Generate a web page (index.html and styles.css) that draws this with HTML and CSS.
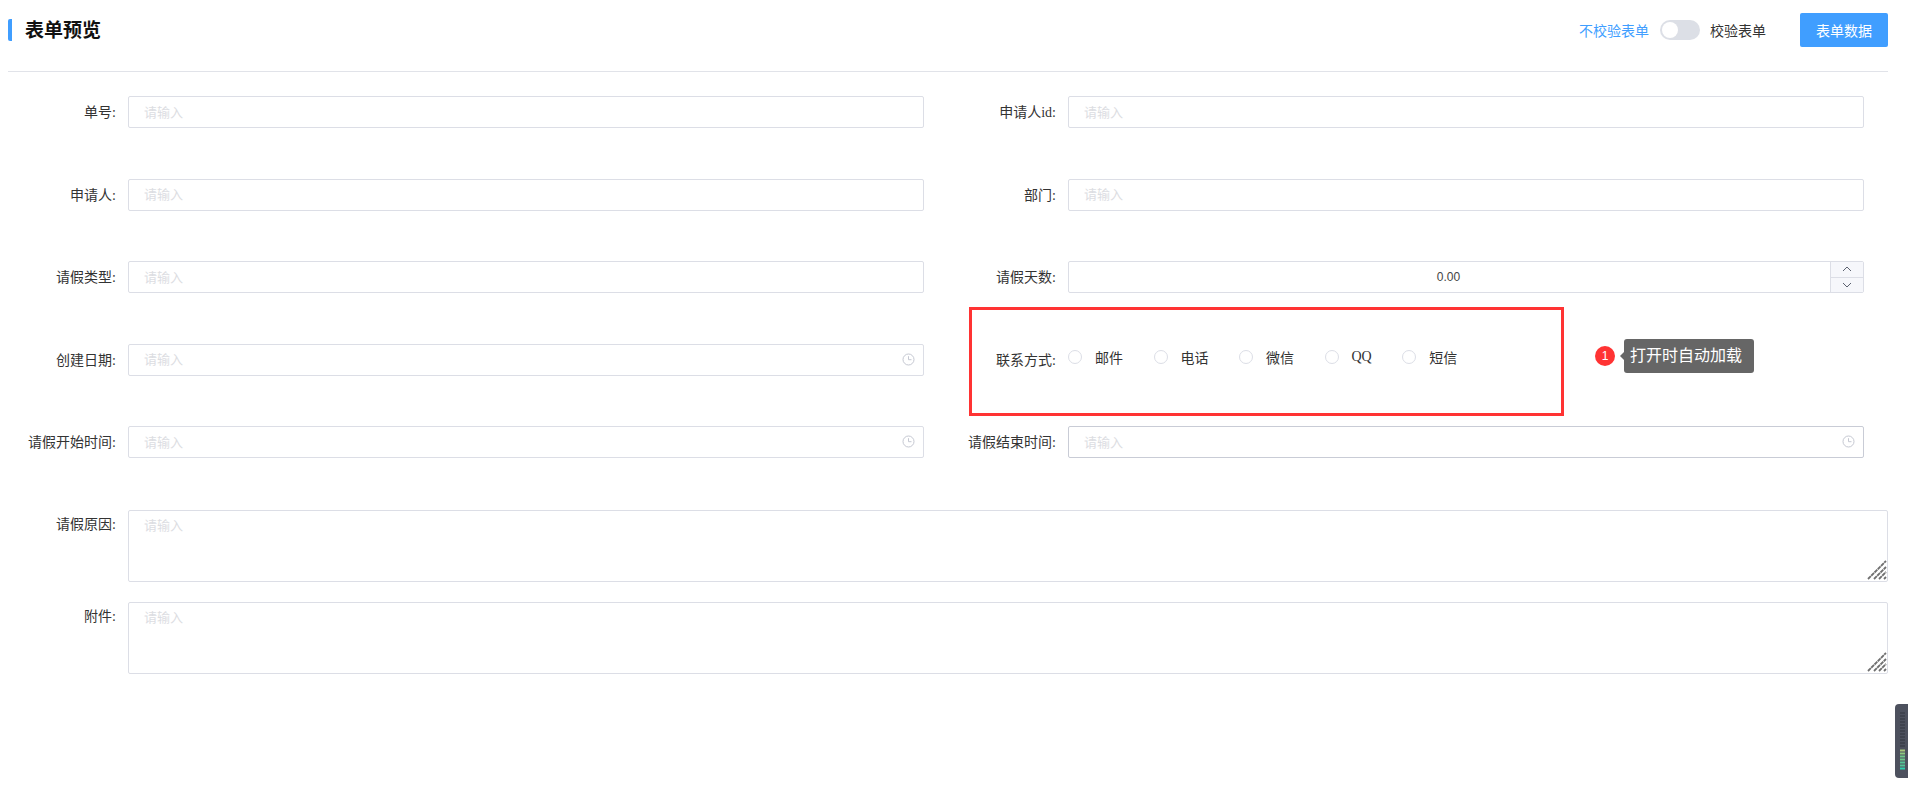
FILE: index.html
```html
<!DOCTYPE html>
<html lang="zh-CN">
<head>
<meta charset="utf-8">
<title>表单预览</title>
<link rel="stylesheet" href="styles.css">
</head>
<body>
<div class="page">
  <header class="head">
    <h1 class="title">表单预览</h1>
    <div class="tools">
      <span class="off-label">不校验表单</span>
      <span class="switch"><span class="knob"></span></span>
      <span class="on-label">校验表单</span>
      <button class="primary" type="button">表单数据</button>
    </div>
  </header>
  <form class="form">
    <div class="grid">
      <div class="item"><label class="label">单号:</label><div class="field"><input class="input" placeholder="请输入"></div></div>
      <div class="item"><label class="label">申请人id:</label><div class="field"><input class="input" placeholder="请输入"></div></div>
      <div class="item"><label class="label">申请人:</label><div class="field"><input class="input" placeholder="请输入"></div></div>
      <div class="item"><label class="label">部门:</label><div class="field"><input class="input" placeholder="请输入"></div></div>
      <div class="item"><label class="label">请假类型:</label><div class="field"><input class="input" placeholder="请输入"></div></div>
      <div class="item"><label class="label">请假天数:</label>
        <div class="field number">
          <input class="num-input" value="0.00">
          <div class="stepper">
            <span class="step"><svg width="12" height="12" viewBox="0 0 12 12"><path d="M2 8l4-4 4 4" class="chev"/></svg></span>
            <span class="step"><svg width="12" height="12" viewBox="0 0 12 12"><path d="M2 4l4 4 4-4" class="chev"/></svg></span>
          </div>
        </div>
      </div>
      <div class="item"><label class="label">创建日期:</label><div class="field"><input class="input" placeholder="请输入">
        <svg class="clock" width="13" height="13" viewBox="0 0 13 13"><circle cx="6.5" cy="6.5" r="5.5"/><path d="M6.5 3.2v3.5h3"/></svg></div></div>
      <div class="item"><label class="label">联系方式:</label>
        <div class="radios">
          <label class="radio"><span class="dot"></span><span>邮件</span></label>
          <label class="radio"><span class="dot"></span><span>电话</span></label>
          <label class="radio"><span class="dot"></span><span>微信</span></label>
          <label class="radio"><span class="dot"></span><span class="latin">QQ</span></label>
          <label class="radio"><span class="dot"></span><span>短信</span></label>
        </div>
      </div>
      <div class="item"><label class="label">请假开始时间:</label><div class="field"><input class="input" placeholder="请输入">
        <svg class="clock" width="13" height="13" viewBox="0 0 13 13"><circle cx="6.5" cy="6.5" r="5.5"/><path d="M6.5 3.2v3.5h3"/></svg></div></div>
      <div class="item"><label class="label">请假结束时间:</label><div class="field"><input class="input hover" placeholder="请输入">
        <svg class="clock" width="13" height="13" viewBox="0 0 13 13"><circle cx="6.5" cy="6.5" r="5.5"/><path d="M6.5 3.2v3.5h3"/></svg></div></div>
    </div>
    <div class="wide">
      <div class="item"><label class="label tall">请假原因:</label>
        <div class="area-wrap"><textarea class="area" placeholder="请输入"></textarea>
          <svg class="grip" width="20" height="20" viewBox="0 0 20 20"><path d="M1 19L19 1M7 19L19 7M12 19l7-7M17 19l2-2"/></svg></div></div>
      <div class="item"><label class="label tall">附件:</label>
        <div class="area-wrap"><textarea class="area" placeholder="请输入"></textarea>
          <svg class="grip" width="20" height="20" viewBox="0 0 20 20"><path d="M1 19L19 1M7 19L19 7M12 19l7-7M17 19l2-2"/></svg></div></div>
    </div>
  </form>
  <div class="mark"></div>
  <div class="hint"><span class="badge">1</span><span class="tip">打开时自动加载</span></div>
  <svg class="widget" width="13" height="74" viewBox="0 0 13 74">
    <path d="M13 0H4Q0 0 0 4V70Q0 74 4 74H13Z" fill="#4d515e"/>
    <path class="leds-off" d="M5 9h5M5 12h5M5 15h5M5 18h5M5 21h5M5 24h5M5 27h5M5 30h5M5 33h5M5 36h5M5 39h5M5 42h5"/>
    <path class="led" d="M5 46.500h5" stroke="#a9c77a"/>
    <path class="led" d="M5 49.500h5" stroke="#8fca80"/>
    <path class="led" d="M5 52.500h5M5 55.500h5" stroke="#6fc78a"/>
    <path class="led" d="M5 58.500h5M5 61.500h5" stroke="#54c495"/>
    <path class="led" d="M5 64.500h5" stroke="#2ed0ad"/>
  </svg>
</div>
</body>
</html>
```

FILE: styles.css
```css
* { box-sizing: border-box; }
html, body { margin: 0; height: 100%; background: #fff; overflow: hidden; }
body {
  font-family: "Liberation Serif", "Noto Sans CJK SC", serif;
  font-size: 14px;
  color: #333;
}
.page { position: relative; height: 797px; padding: 0 20px 0 8px; }

.head {
  height: 72px;
  display: flex;
  align-items: flex-start;
  justify-content: space-between;
  border-bottom: 1px solid #e1e3e9;
}
.title {
  margin: 19px 0 0;
  height: 22px;
  padding-left: 13px;
  border-left: 4px solid #409eff;
  border-radius: 2px;
  font: 700 19px/20px "Noto Sans CJK SC", sans-serif;
  color: #111;
}
.tools { display: flex; align-items: center; margin-top: 13px; height: 34px; }
.off-label { color: #409eff; }
.on-label { color: #333; margin-right: 34px; }
.switch {
  width: 40px;
  height: 20px;
  margin: 0 10px 0 11px;
  padding: 2px;
  border-radius: 10px;
  background: #dcdfe6;
}
.knob { display: block; width: 16px; height: 16px; border-radius: 50%; background: #fff; }
.primary {
  width: 88px;
  height: 34px;
  border: 0;
  border-radius: 2px;
  background: #409eff;
  color: #fff;
  font: 14px "Liberation Sans", "Noto Sans CJK SC", sans-serif;
}

.form { padding-top: 24px; }
.grid {
  display: grid;
  grid-template-columns: 1fr 1fr;
  row-gap: 50.5px;
}
.grid > .item { padding-right: 24px; }
.item { display: flex; align-items: flex-start; }
.label {
  flex: none;
  width: 120px;
  height: 32px;
  padding-right: 12px;
  line-height: 33px;
  text-align: right;
  color: #333;
}
.label.tall { line-height: 30px; }
.field { position: relative; flex: 1; height: 32px; }
.input {
  display: block;
  width: 100%;
  height: 32px;
  padding: 0 15px;
  border: 1px solid #dcdee6;
  border-radius: 2px;
  outline: 0;
  font: 13px "Liberation Sans", "Noto Sans CJK SC", sans-serif;
}
.input.hover { border-color: #c9ccd6; }
.input::placeholder, .area::placeholder { color: #dcdde2; opacity: 1; }
.clock {
  position: absolute;
  top: 9px;
  right: 9px;
  fill: none;
  stroke: #c5c8d2;
  stroke-width: 1;
}

.number { display: flex; border: 1px solid #dcdee6; border-radius: 2px; }
.num-input {
  flex: 1;
  min-width: 0;
  padding: 0 2px 0 0;
  border: 0;
  outline: 0;
  background: none;
  text-align: center;
  color: #444;
  font: 12px "Liberation Sans", "Noto Sans CJK SC", sans-serif;
}
.stepper {
  flex: none;
  width: 33px;
  display: flex;
  flex-direction: column;
  border-left: 1px solid #dcdee6;
  background: #f6f7fb;
}
.step { flex: 1; display: flex; align-items: center; justify-content: center; }
.step + .step { border-top: 1px solid #dcdee6; }
.chev { fill: none; stroke: #5c6270; stroke-width: 1; }

.radios { display: flex; height: 26px; align-items: center; }
.radio { display: flex; align-items: center; margin-right: 30.5px; color: #333; }
.latin { padding-top: 1px; }
.dot {
  width: 14px;
  height: 14px;
  margin-right: 13px;
  border: 1px solid #dcdee6;
  border-radius: 50%;
}

.wide { margin-top: 52px; display: flex; flex-direction: column; gap: 20px; }
.area-wrap { position: relative; flex: 1; height: 72px; }
.area {
  display: block;
  width: 100%;
  height: 72px;
  padding: 5px 15px;
  border: 1px solid #dcdee6;
  border-radius: 2px;
  outline: 0;
  resize: none;
  font: 13px/20px "Liberation Sans", "Noto Sans CJK SC", sans-serif;
}
.grip {
  position: absolute;
  right: 1px;
  bottom: 2px;
  fill: none;
  stroke: #6f6f6f;
  stroke-width: 1.800;
  stroke-dasharray: 4 0.600;
}

.mark {
  position: absolute;
  left: 969px;
  top: 307px;
  width: 595px;
  height: 109px;
  border: 3px solid #ff3333;
}
.hint {
  position: absolute;
  left: 1595px;
  top: 339px;
  display: flex;
  align-items: center;
}
.badge {
  width: 20px;
  height: 20px;
  border-radius: 50%;
  background: #ff3333;
  color: #fff;
  font: 12px/20px "Liberation Sans", sans-serif;
  text-align: center;
}
.tip {
  position: relative;
  margin-left: 9px;
  width: 130px;
  height: 34px;
  padding-left: 6px;
  border-radius: 3px;
  background: #666;
  color: #fff;
  font-size: 16px;
  line-height: 34px;
  white-space: nowrap;
}
.tip::before {
  content: "";
  position: absolute;
  left: -4px;
  top: 13px;
  border: 4px solid transparent;
  border-left-width: 0;
  border-right-color: #666;
}
.widget { position: absolute; left: 1895px; top: 704px; }
.leds-off { stroke: #33363f; fill: none; }
.led { fill: none; stroke-width: 2; }
```
